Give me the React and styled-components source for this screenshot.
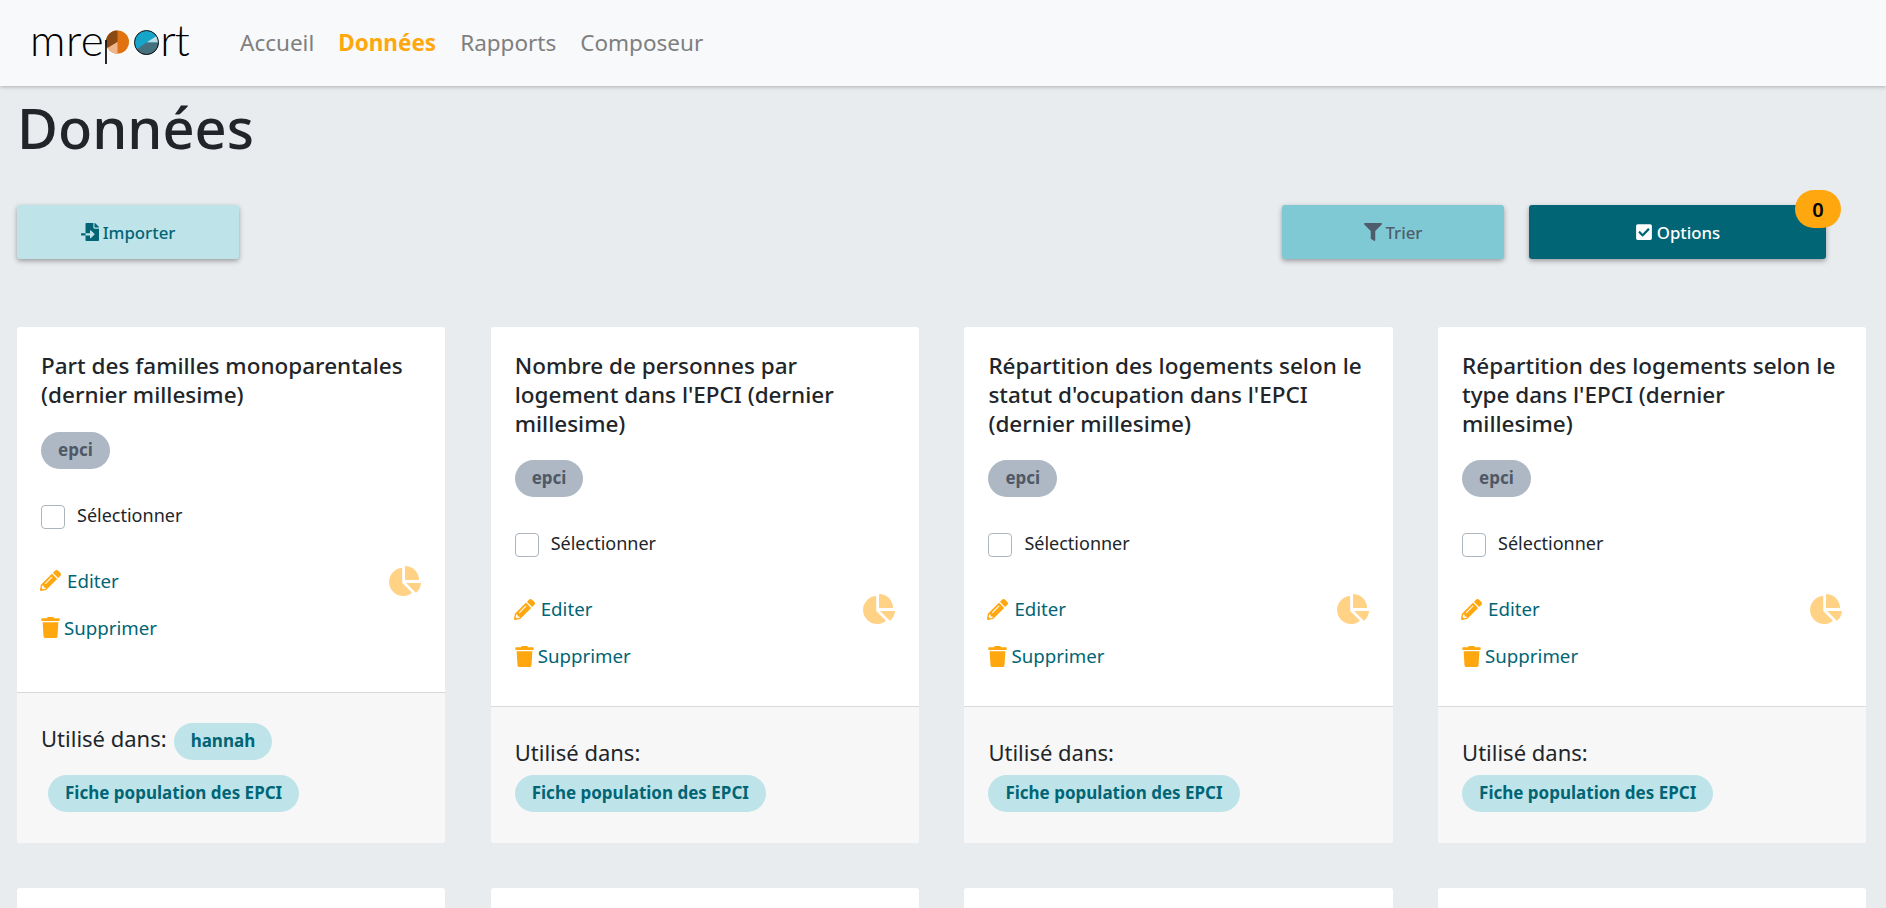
import React from 'react';
import styled, {createGlobalStyle} from 'styled-components';
import {FaChartPie, FaCheckSquare, FaFileImport, FaFilter, FaPencilAlt, FaTrash} from 'react-icons/fa';

const GlobalStyle = createGlobalStyle`
    html, body {
        margin: 0;
        height: 100%;
        overflow: hidden;
        background: #e9ecef;
        font-family: "Noto Sans", "Open Sans", "Liberation Sans", sans-serif;
        color: #212529;
    }
`;

const cards = [
    {
        title: 'Part des familles monoparentales (dernier millesime)',
        reports: ['hannah', 'Fiche population des EPCI'],
    },
    {
        title: "Nombre de personnes par logement dans l'EPCI (dernier millesime)",
        reports: ['Fiche population des EPCI'],
    },
    {
        title: "Répartition des logements selon le statut d'ocupation dans l'EPCI (dernier millesime)",
        reports: ['Fiche population des EPCI'],
    },
    {
        title: "Répartition des logements selon le type dans l'EPCI (dernier millesime)",
        reports: ['Fiche population des EPCI'],
    },
];

//the p and the o of the logo are two small pies
const Logo = () => (
    <Brand>
        <span>mre</span>
        <LogoP width="24" height="34" viewBox="0 0 24 34">
            <circle cx="12.5" cy="12" r="11.5" fill="#e0730f" />
            <path d="M12.5 12V.5A11.5 11.5 0 0 0 2.5 18z" fill="#8a4a14" />
            <path d="M12.5 12l-10 6a11.5 11.5 0 0 0 10 5.500z" fill="#eeb68c" />
            <path d="M1 10v24" stroke="#111" strokeWidth="1.800" />
        </LogoP>
        <LogoO width="25" height="25" viewBox="0 0 25 25">
            <circle cx="12.500" cy="12.500" r="12" fill="#16a5c8" />
            <path d="M12.500 12.500L22.500 6a12 12 0 0 1 2 6.500z" fill="#bcdce6" />
            <path d="M12.500 12.500h12a12 12 0 0 1-22 7z" fill="#47707f" />
            <circle cx="12.500" cy="12.500" r="12" fill="none" stroke="#111" strokeWidth="1" />
        </LogoO>
        <span>rt</span>
    </Brand>
);

const DataCard = ({title, reports}) => (
    <Card>
        <CardBody>
            <CardTitle>{title}</CardTitle>
            <Tag>epci</Tag>
            <SelectRow>
                <Checkbox />
                <SelectLabel>Sélectionner</SelectLabel>
            </SelectRow>
            <ActionRow>
                <ActionLink>
                    <FaPencilAlt />
                    Editer
                </ActionLink>
                <PieIcon />
            </ActionRow>
            <ActionLink $top={19} $gap={3}>
                <FaTrash />
                Supprimer
            </ActionLink>
        </CardBody>
        <CardFooter>
            Utilisé dans:
            {reports.map(report => (
                <ReportTag key={report} $alone={reports.length === 1}>{report}</ReportTag>
            ))}
        </CardFooter>
    </Card>
);

const App = () => {
    return (
        <Page>
            <GlobalStyle />
            <Navbar>
                <Logo />
                <NavLink>Accueil</NavLink>
                <NavLink $active>Données</NavLink>
                <NavLink>Rapports</NavLink>
                <NavLink>Composeur</NavLink>
            </Navbar>
            <Content>
                <Title>Données</Title>
                <Toolbar>
                    <ToolButton $variant="light" $width={222}>
                        <FaFileImport />
                        Importer
                    </ToolButton>
                    <ToolbarRight>
                        <ToolButton $variant="medium" $width={222}>
                            <FaFilter />
                            Trier
                        </ToolButton>
                        <ToolButton $variant="dark" $width={297}>
                            <FaCheckSquare />
                            Options
                            <Badge>0</Badge>
                        </ToolButton>
                    </ToolbarRight>
                </Toolbar>
                <CardGrid>
                    {cards.map(card => (
                        <DataCard key={card.title} title={card.title} reports={card.reports} />
                    ))}
                    <EmptyCard />
                    <EmptyCard />
                    <EmptyCard />
                    <EmptyCard />
                </CardGrid>
            </Content>
        </Page>
    );
};

const Page = styled.div`
    height: 908px;
    overflow: hidden;
`;

const Navbar = styled.nav`
    height: 86px;
    box-sizing: border-box;
    display: flex;
    align-items: center;
    gap: 24px;
    padding-left: 30px;
    background: #f8f9fa;
    box-shadow: 0 1px 4px rgba(0, 0, 0, 0.25);
`;

const Brand = styled.div`
    width: 186px;
    height: 50px;
    display: flex;
    align-items: flex-start;
    font-family: "Lato", sans-serif;
    font-weight: 300;
    font-size: 44px;
    line-height: 50px;
    color: #000;
    letter-spacing: 0.5px;
    span {
        margin-top: -4px;
    }
    span:last-child {
        margin-left: -1px;
        letter-spacing: -1px;
    }
`;

const LogoP = styled.svg`
    flex: none;
    margin: 12px 5px 0 1px;
`;

const LogoO = styled.svg`
    flex: none;
    margin: 12px 2px 0 0;
`;

const NavLink = styled.a`
    margin-top: -2px;
    font-size: 22.5px;
    font-weight: ${props => (props.$active ? 700 : 400)};
    color: ${props => (props.$active ? '#ffa70f' : '#7f7f7f')};
`;

const Content = styled.main`
    padding: 0 19px 0 17px;
`;

const Title = styled.h1`
    margin: 0;
    font-size: 56px;
    font-weight: 500;
    line-height: 82px;
    color: #212529;
`;

const Toolbar = styled.div`
    margin-top: 37px;
    display: flex;
    justify-content: space-between;
`;

const ToolbarRight = styled.div`
    display: flex;
    gap: 25px;
    margin-right: 41px;
`;

const buttonColors = {
    light: {background: '#bee4ea', color: '#016575'},
    medium: {background: '#7fc9d5', color: '#4f5d6a'},
    dark: {background: '#016575', color: '#ffffff'},
};

const ToolButton = styled.button`
    position: relative;
    width: ${props => props.$width}px;
    height: 54px;
    display: flex;
    align-items: center;
    justify-content: center;
    gap: 4px;
    border: none;
    border-radius: 3px;
    font-family: inherit;
    font-size: 16.8px;
    font-weight: 500;
    background: ${props => buttonColors[props.$variant].background};
    color: ${props => buttonColors[props.$variant].color};
    box-shadow: 0 2px 5px rgba(0, 0, 0, 0.35);
    svg {
        font-size: 18px;
    }
`;

const Badge = styled.span`
    position: absolute;
    top: -15px;
    right: -15px;
    width: 46px;
    height: 38px;
    display: flex;
    align-items: center;
    justify-content: center;
    border-radius: 19px;
    background: #ffa70f;
    color: #000;
    font-size: 20px;
    font-weight: 600;
`;

const CardGrid = styled.div`
    margin-top: 68px;
    display: grid;
    grid-template-columns: repeat(4, 428.4px);
    column-gap: 45.3px;
    row-gap: 45px;
`;

const Card = styled.article`
    display: flex;
    flex-direction: column;
    background: #fff;
    border-radius: 3px;
`;

const EmptyCard = styled(Card)`
    height: 300px;
`;

const CardBody = styled.div`
    padding: 25px 24px 37px;
`;

const CardTitle = styled.h5`
    margin: 0 0 22px;
    padding-right: 3px;
    font-size: 22.5px;
    font-weight: 500;
    line-height: 28.8px;
    color: #212529;
`;

const Tag = styled.span`
    display: block;
    width: fit-content;
    height: 37px;
    padding: 0 17px;
    border-radius: 19px;
    background: #adb8c4;
    color: #4f5864;
    font-size: 17px;
    font-weight: 700;
    line-height: 36px;
`;

const SelectRow = styled.div`
    margin-top: 36px;
    height: 24px;
    display: flex;
    align-items: center;
    gap: 12px;
    font-size: 18px;
    color: #212529;
`;

const SelectLabel = styled.span`
    margin-top: -4px;
`;

const Checkbox = styled.span`
    width: 24px;
    height: 24px;
    box-sizing: border-box;
    border: 1px solid #adb5bd;
    border-radius: 4px;
    background: #fff;
`;

const ActionRow = styled.div`
    margin-top: 37px;
    height: 30px;
    display: flex;
    align-items: center;
    justify-content: space-between;
`;

const ActionLink = styled.a`
    display: flex;
    align-items: center;
    gap: ${props => props.$gap || 6}px;
    margin-top: ${props => props.$top || 0}px;
    margin-left: -1px;
    font-size: 18.7px;
    line-height: 26px;
    color: #016575;
    svg {
        color: #ffa70f;
        font-size: 21px;
    }
`;

const PieIcon = styled(FaChartPie)`
    width: 32px;
    height: 30px;
    color: #ffa70f;
    opacity: 0.5;
`;

const CardFooter = styled.footer`
    margin-top: auto;
    padding: 30px 24px 31px;
    background: #f7f7f7;
    border-top: 1px solid #d9d9d9;
    border-radius: 0 0 3px 3px;
    font-size: 22px;
    line-height: 30px;
`;

const ReportTag = styled.span`
    display: ${props => (props.$alone ? 'block' : 'inline-block')};
    width: fit-content;
    height: 37px;
    margin: ${props => (props.$alone ? '8px 0 0' : '0 0 0 7px')};
    padding: 0 17px;
    border-radius: 19px;
    background: #bee4ea;
    color: #016575;
    font-size: 17px;
    font-weight: 700;
    line-height: 36px;
    & + & {
        margin-top: 15px;
    }
`;

export default App;
